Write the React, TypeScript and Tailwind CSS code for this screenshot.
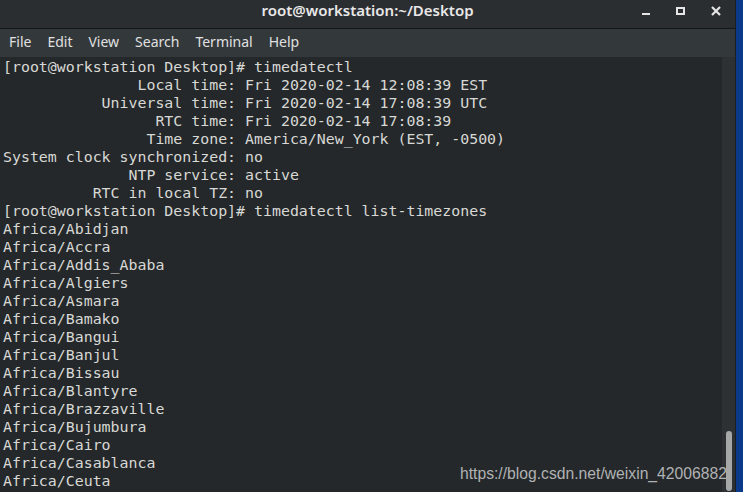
import React from "react";

const lines = [
  "[root@workstation Desktop]# timedatectl",
  "               Local time: Fri 2020-02-14 12:08:39 EST",
  "           Universal time: Fri 2020-02-14 17:08:39 UTC",
  "                 RTC time: Fri 2020-02-14 17:08:39",
  "                Time zone: America/New_York (EST, -0500)",
  "System clock synchronized: no",
  "              NTP service: active",
  "          RTC in local TZ: no",
  "[root@workstation Desktop]# timedatectl list-timezones",
  "Africa/Abidjan",
  "Africa/Accra",
  "Africa/Addis_Ababa",
  "Africa/Algiers",
  "Africa/Asmara",
  "Africa/Bamako",
  "Africa/Bangui",
  "Africa/Banjul",
  "Africa/Bissau",
  "Africa/Blantyre",
  "Africa/Brazzaville",
  "Africa/Bujumbura",
  "Africa/Cairo",
  "Africa/Casablanca",
  "Africa/Ceuta",
];

const menus = ["File", "Edit", "View", "Search", "Terminal", "Help"];

export default function App() {
  return (
    <div className="relative flex h-[492px] w-[743px] overflow-hidden bg-[#0b3a8a]">
      <div className="flex w-[736px] flex-col border-r border-[#1c1f21]">
        {/* Title bar */}
        <div className="relative flex h-[29px] shrink-0 items-center justify-center border-b border-[#141617] bg-[#2b2e31] pb-[7px]">
          <span
            className="text-[15px] font-semibold text-[#e8e8e8]"
            style={{ fontFamily: "'Noto Sans', 'Open Sans', sans-serif" }}
          >
            root@workstation:~/Desktop
          </span>
          <div className="absolute right-[14px] top-0 flex h-full items-center gap-[26px] pb-[7px]">
            <div className="mt-[7px] h-[2px] w-[8px] bg-[#e6e6e6]" />
            <div className="h-[8px] w-[9px] border-2 border-[#e6e6e6]" />
            <svg width="10" height="10" viewBox="0 0 10 10">
              <path d="M1 1 L9 9 M9 1 L1 9" stroke="#e6e6e6" strokeWidth="2.2" />
            </svg>
          </div>
        </div>
        {/* Menu bar */}
        <div
          className="flex h-[28px] shrink-0 items-center gap-[16px] bg-[#33383b] pb-[3px] pl-[9px] text-[14px] text-[#e0e0e0]"
          style={{ fontFamily: "'Noto Sans', 'Open Sans', sans-serif" }}
        >
          {menus.map((m) => (
            <span key={m}>{m}</span>
          ))}
        </div>
        {/* Terminal body */}
        <div className="flex flex-1 overflow-hidden">
          <div
            className="flex-1 overflow-hidden bg-[#24282a] pl-[3px] pt-[1px] text-[14.9px] leading-[18px] text-[#d8d8d5]"
            style={{ fontFamily: "'DejaVu Sans Mono', monospace" }}
          >
            {lines.map((l, i) => (
              <div key={i} className="whitespace-pre">
                {l}
              </div>
            ))}
          </div>
          <div className="flex w-[13px] flex-col items-center bg-[#2d3134]">
            <div className="mt-[374px] h-[60px] w-[6px] rounded-full bg-[#a6a7a7]" />
          </div>
        </div>
      </div>
      <div
        className="absolute left-[460px] top-[462px] text-[15.7px] text-[#b0b2b3]"
        style={{ fontFamily: "'Liberation Sans', Arial, sans-serif" }}
      >
        https://blog.csdn.net/weixin_42006882
      </div>
    </div>
  );
}
